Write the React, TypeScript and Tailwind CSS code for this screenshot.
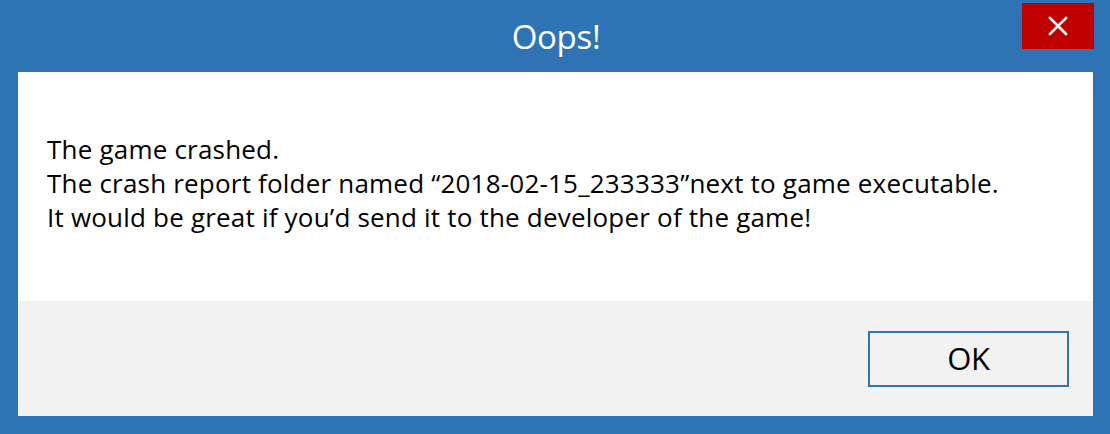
export default function App() {
  return (
    <div
      className="relative w-[1110px] h-[434px] bg-[#2e74b5] pt-[72px] pl-[18px] pr-[17px] pb-[18px] flex flex-col"
      style={{ fontFamily: '"Open Sans", "Noto Sans", sans-serif' }}
    >
      {/* title */}
      <div className="absolute top-0 left-0 right-0 h-[72px] flex items-center justify-center">
        <span className="text-white text-[33px] leading-none tracking-[-0.3px] pl-[2px]">Oops!</span>
      </div>
      <button className="absolute top-[3px] right-[16px] w-[72px] h-[46px] bg-[#c00000] flex items-center justify-center">
        <svg width="20" height="20" viewBox="0 0 20 20">
          <path d="M2 2 L18 18 M18 2 L2 18" stroke="white" strokeWidth="2.6" strokeLinecap="square" />
        </svg>
      </button>

      <div className="bg-white pt-[60px] pl-[29px] h-[229px] flex-none">
        <div className="text-black text-[26px] leading-[34px] tracking-[0.2px]">
          <p>The game crashed.</p>
          <p>The crash report folder named “2018-02-15_233333”next to game executable.</p>
          <p>It would be great if you’d send it to the developer of the game!</p>
        </div>
      </div>

      <div className="flex-1 bg-[#f2f2f2] flex items-center justify-end pr-[24px]">
        <button className="w-[201px] h-[56px] border-2 border-[#2e74b5] flex items-center justify-center text-black text-[31px] leading-none tracking-[-0.3px]">
          OK
        </button>
      </div>
    </div>
  );
}
